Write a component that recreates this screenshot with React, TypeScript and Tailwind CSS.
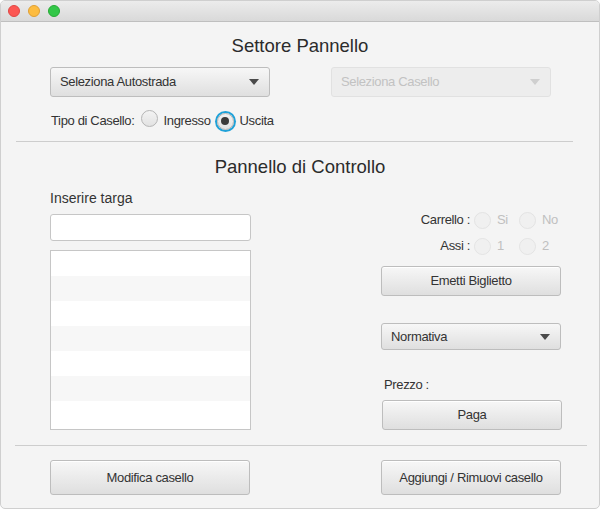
import React from "react";

const font = { fontFamily: '"Liberation Sans", Arial, sans-serif' };

function Radio({ checked = false, disabled = false, focused = false }: { checked?: boolean; disabled?: boolean; focused?: boolean }) {
  return (
    <span
      className={
        "relative inline-flex items-center justify-center w-[17px] h-[17px] rounded-full " +
        (focused ? "ring-[2px] ring-[#1fa1d8] " : "") +
        (disabled ? "border border-[#e3e3e3] bg-[#f0f0f0]" : "border border-[#b5b5b5] bg-gradient-to-b from-[#f3f3f3] to-[#e2e2e2]")
      }
    >
      {checked && <span className="w-[8px] h-[8px] rounded-full bg-[#3a3a3a]" />}
    </span>
  );
}

function Caret({ disabled = false }: { disabled?: boolean }) {
  return (
    <svg width="10" height="6" viewBox="0 0 10 6">
      <path d="M0 0 L10 0 L5 6 Z" fill={disabled ? "#cfcfcf" : "#4a4a4a"} />
    </svg>
  );
}

const btn =
  "flex items-center justify-center rounded-[3px] border border-[#bdbdbd] bg-gradient-to-b from-[#f7f7f7] to-[#dfdfdf] text-[13px] tracking-[-0.35px] text-[#333] shadow-[inset_0_1px_0_#ffffff]";

export default function App() {
  return (
    <div className="w-[601px] h-[510px] bg-white" style={font}>
      <div className="w-[600px] h-[509px] rounded-[5px] border border-[#cfcfcf] bg-[#f4f4f4] overflow-hidden flex flex-col">
        <div className="h-[21px] shrink-0 border-b border-[#bfbfbf] bg-gradient-to-b from-[#ececec] to-[#d9d9d9] flex items-center pl-[7px] gap-[8px]">
          <span className="w-[12px] h-[12px] rounded-full bg-[#fc5753] border border-[#df4744]" />
          <span className="w-[12px] h-[12px] rounded-full bg-[#fdbc40] border border-[#de9f34]" />
          <span className="w-[12px] h-[12px] rounded-full bg-[#33c748] border border-[#27aa35]" />
        </div>

        <div className="flex flex-col text-[#333]">
          <div className="h-[22px] mt-[13px] text-center text-[18.5px] leading-[22px] text-[#2b2b2b]">Settore Pannello</div>

          <div className="mt-[10px] flex pl-[49px] gap-[61px] tracking-[-0.35px]">
            <div className="w-[220px] h-[30px] rounded-[3px] border border-[#bdbdbd] bg-gradient-to-b from-[#f7f7f7] to-[#dfdfdf] flex items-center justify-between pl-[9px] pr-[10px] text-[13px] text-[#333]">
              <span>Seleziona Autostrada</span>
              <Caret />
            </div>
            <div className="w-[220px] h-[30px] rounded-[3px] border border-[#e1e1e1] bg-[#ededed] flex items-center justify-between pl-[9px] pr-[10px] text-[13px] text-[#c2c2c2]">
              <span>Seleziona Casello</span>
              <Caret disabled />
            </div>
          </div>

          <div className="mt-[14px] h-[20px] flex items-center pl-[50px] text-[13px] tracking-[-0.35px]">
            <span>Tipo di Casello:</span>
            <span className="ml-[6px]"><Radio /></span>
            <span className="ml-[6px]">Ingresso</span>
            <span className="ml-[6px]"><Radio checked focused /></span>
            <span className="ml-[6px]">Uscita</span>
          </div>

          <div className="mt-[10px] ml-[15px] w-[557px] h-px bg-[#cdcdcd]" />

          <div className="mt-[14px] h-[22px] text-center text-[18.5px] leading-[22px] text-[#2b2b2b]">Pannello di Controllo</div>

          <div className="flex">
            <div className="ml-[49px] w-[201px] flex flex-col">
              <div className="mt-[11px] h-[18px] leading-[18px] text-[14px]">Inserire targa</div>
              <div className="mt-[7px] h-[27px] rounded-[3px] border border-[#c6c6c6] bg-white" />
              <div className="mt-[9px] h-[180px] border border-[#c6c6c6] bg-white flex flex-col overflow-hidden">
                <div className="h-[25px] shrink-0 bg-white" />
                <div className="h-[25px] shrink-0 bg-[#f7f7f7]" />
                <div className="h-[25px] shrink-0 bg-white" />
                <div className="h-[25px] shrink-0 bg-[#f7f7f7]" />
                <div className="h-[25px] shrink-0 bg-white" />
                <div className="h-[25px] shrink-0 bg-[#f7f7f7]" />
                <div className="h-[25px] shrink-0 bg-white" />
              </div>
            </div>

            <div className="ml-[130px] w-[181px] flex flex-col text-[13px] tracking-[-0.35px]">
              <div className="mt-[32px] h-[20px] flex items-center">
                <span className="w-[93px] text-right pr-[4px]">Carrello :</span>
                <Radio disabled />
                <span className="ml-[6px] w-[22px] text-[#c0c0c0]">Si</span>
                <Radio disabled />
                <span className="ml-[6px] text-[#c0c0c0]">No</span>
              </div>
              <div className="mt-[6px] h-[20px] flex items-center">
                <span className="w-[93px] text-right pr-[4px]">Assi :</span>
                <Radio disabled />
                <span className="ml-[6px] w-[22px] text-[#c0c0c0]">1</span>
                <Radio disabled />
                <span className="ml-[6px] text-[#c0c0c0]">2</span>
              </div>
              <div className={btn + " mt-[10px] h-[30px] w-[180px]"}>Emetti Biglietto</div>
              <div className="mt-[27px] w-[180px] h-[27px] rounded-[3px] border border-[#bdbdbd] bg-gradient-to-b from-[#f7f7f7] to-[#dfdfdf] flex items-center justify-between pl-[9px] pr-[10px] text-[13px]">
                <span>Normativa</span>
                <Caret />
              </div>
              <div className="mt-[26px] h-[18px] leading-[18px] pl-[3px]">Prezzo :</div>
              <div className={btn + " mt-[6px] h-[30px] w-[180px] ml-[1px]"}>Paga</div>
            </div>
          </div>

          <div className="mt-[15px] ml-[14px] w-[572px] h-px bg-[#cdcdcd]" />

          <div className="mt-[14px] flex">
            <div className={btn + " ml-[49px] w-[200px] h-[35px]"}>Modifica casello</div>
            <div className={btn + " ml-[131px] w-[180px] h-[35px]"}>Aggiungi / Rimuovi casello</div>
          </div>
        </div>
      </div>
    </div>
  );
}
